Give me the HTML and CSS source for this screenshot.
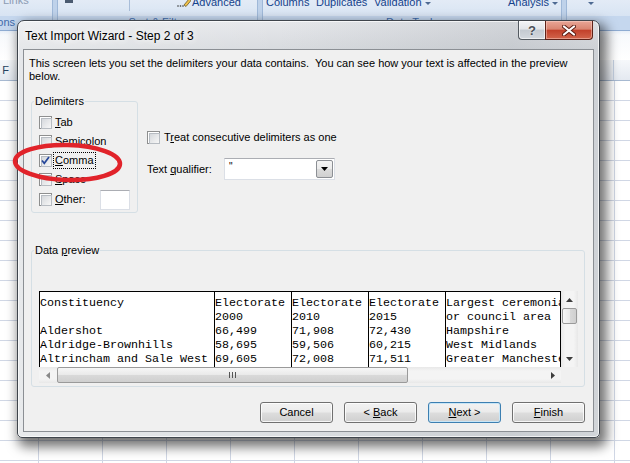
FILE: index.html
```html
<!DOCTYPE html>
<html lang="en">
<head>
<meta charset="utf-8">
<title>Text Import Wizard - Step 2 of 3</title>
<link rel="stylesheet" href="styles.css">
</head>
<body>
<div class="excel">
  <div class="ribbon">
    <div class="grp g-conn">
      <div class="grp-body"><span class="rb-item dim">Links</span></div>
      <div class="grp-label conn-label"><span>Connections</span></div>
    </div>
    <div class="grp g-sort">
      <div class="grp-body">
        <span class="sort-ico"></span>
        <span class="rb-sep"></span>
        <svg class="adv-ico" width="14" height="9" viewBox="0 0 14 9"><circle cx="1" cy="7" r="0.8" fill="#333"/><circle cx="3.5" cy="7" r="0.8" fill="#333"/><circle cx="6" cy="7" r="0.8" fill="#333"/><path d="M7 6 L12 0 L14 1.5 L9 7.5 Z" fill="#f2c24a" stroke="#6b5a2a" stroke-width="0.8"/></svg>
        <span class="rb-item">Advanced</span>
      </div>
      <div class="grp-label">Sort &amp; Filter</div>
    </div>
    <div class="grp g-data">
      <div class="grp-body">
        <span class="rb-item i-cols">Columns</span>
        <span class="rb-item i-dup">Duplicates</span>
        <span class="rb-item i-val">Validation <span class="caret"></span></span>
        <span class="rb-item i-ana">Analysis <span class="caret"></span></span>
      </div>
      <div class="grp-label">Data Tools</div>
    </div>
    <div class="grp g-out">
      <div class="grp-body"><span class="rb-item i-out"><span class="caret"></span></span></div>
      <div class="grp-label"></div>
    </div>
  </div>
  <div class="formula"></div>
  <div class="colhead">
    <span class="hcell first">F</span><span class="hcell">G</span><span class="hcell">H</span><span class="hcell">I</span><span class="hcell">J</span><span class="hcell">K</span><span class="hcell">L</span><span class="hcell">M</span><span class="hcell">N</span><span class="hcell">O</span><span class="hcell">P</span>
  </div>
  <div class="grid"></div>
</div>

<div class="dialog">
  <div class="titlebar">
    <span class="title">Text Import Wizard - Step 2 of 3</span>
    <div class="capbtns">
      <span class="cap help">?</span>
      <span class="cap close"><svg width="14" height="11" viewBox="0 0 14 11"><path d="M2 1.5 L12 9.5 M12 1.5 L2 9.5" stroke="#5b1c12" stroke-width="4" stroke-linecap="round"/><path d="M2 1.5 L12 9.5 M12 1.5 L2 9.5" stroke="#fff" stroke-width="2.2" stroke-linecap="round"/></svg></span>
    </div>
  </div>
  <div class="client">
    <p class="intro">This screen lets you set the delimiters your data contains.&nbsp; You can see how your text is affected in the preview<br>below.</p>
    <div class="options">
      <fieldset class="group delims">
        <legend>Delimiters</legend>
        <div class="cb-row"><span class="cb"></span><span class="lbl"><u>T</u>ab</span></div>
        <div class="cb-row"><span class="cb"></span><span class="lbl">Se<u>m</u>icolon</span></div>
        <div class="cb-row"><span class="cb checked"><svg width="11" height="11" viewBox="0 0 11 11"><path d="M2 5.5 L4.3 8.3 L9 2" fill="none" stroke="#26479a" stroke-width="1.7"/></svg></span><span class="lbl focus"><u>C</u>omma</span></div>
        <div class="cb-row"><span class="cb"></span><span class="lbl"><u>S</u>pace</span></div>
        <div class="cb-row other"><span class="cb"></span><span class="lbl other-lbl"><u>O</u>ther:</span><span class="textbox"></span></div>
      </fieldset>
      <div class="side">
        <div class="cb-row treat"><span class="cb"></span><span class="lbl">T<u>r</u>eat consecutive delimiters as one</span></div>
        <div class="qual-row">
          <span class="qual-label">Text <u>q</u>ualifier:</span>
          <div class="combo">
            <span class="combo-val">"</span>
            <span class="combo-btn"><svg width="7" height="4" viewBox="0 0 7 4"><polygon points="0,0 7,0 3.5,4" fill="#000"/></svg></span>
          </div>
        </div>
      </div>
    </div>
    <fieldset class="group preview-grp">
      <legend>Data <u>p</u>review</legend>
      <div class="preview">
        <div class="ptext">
          <div class="pcol c1">Constituency

Aldershot
Aldridge-Brownhills
Altrincham and Sale West</div>
          <div class="pcol cn">Electorate
2000
66,499
58,695
69,605</div>
          <div class="pcol cn">Electorate
2010
71,908
59,506
72,008</div>
          <div class="pcol cn">Electorate
2015
72,430
60,215
71,511</div>
          <div class="pcol c5">Largest ceremonial
or council area
Hampshire
West Midlands
Greater Manchester</div>
        </div>
        <div class="vscroll">
          <span class="sb-btn"><svg width="7" height="4" viewBox="0 0 7 4"><polygon points="0,4 7,4 3.5,0" fill="#3d3d3d"/></svg></span>
          <span class="thumb vthumb"></span>
          <span class="sb-fill"></span>
          <span class="sb-btn"><svg width="7" height="4" viewBox="0 0 7 4"><polygon points="0,0 7,0 3.5,4" fill="#3d3d3d"/></svg></span>
        </div>
        <div class="hscroll">
          <span class="sb-btn"><svg width="4" height="7" viewBox="0 0 4 7"><polygon points="4,0 4,7 0,3.5" fill="#8a8a8a"/></svg></span>
          <span class="thumb hthumb"><span class="grip"></span></span>
          <span class="sb-fill"></span>
          <span class="sb-btn"><svg width="4" height="7" viewBox="0 0 4 7"><polygon points="0,0 0,7 4,3.5" fill="#3d3d3d"/></svg></span>
        </div>
        <div class="corner"></div>
      </div>
    </fieldset>
    <div class="buttons">
      <span class="btn"><span>Cancel</span></span>
      <span class="btn"><span>&lt; <u>B</u>ack</span></span>
      <span class="btn default"><span><u>N</u>ext &gt;</span></span>
      <span class="btn"><span><u>F</u>inish</span></span>
    </div>
  </div>
</div>

<svg class="annot" width="630" height="463" viewBox="0 0 630 463">
  <ellipse cx="67.5" cy="162.5" rx="52.5" ry="17.5" fill="none" stroke="#e1232a" stroke-width="4.5" transform="rotate(1.5 67.5 162.5)"/>
</svg>
</body>
</html>
```

FILE: styles.css
```css
* { box-sizing: border-box; }
html, body { margin: 0; padding: 0; }
body {
  width: 630px;
  height: 463px;
  overflow: hidden;
  position: relative;
  font-family: "Liberation Sans", Arial, sans-serif;
  font-size: 11px;
  color: #000;
  background: #fff;
}

/* ---------- Excel background ---------- */
.excel { height: 463px; display: flex; flex-direction: column; }
.ribbon {
  height: 31px;
  display: flex;
  gap: 4px;
  background: #bfd2ea;
  border-bottom: 1px solid #8eabd2;
  flex: none;
}
.grp { display: flex; flex-direction: column; flex: none; }
.g-conn { width: 53px; border-right: 1px solid #9fb8d8; }
.g-sort { width: 201px; border-left: 1px solid #9fb8d8; border-right: 1px solid #9fb8d8; }
.g-data { width: 300px; border-left: 1px solid #9fb8d8; border-right: 1px solid #9fb8d8; }
.g-out { flex: 1; border-left: 1px solid #9fb8d8; }
.grp-body {
  height: 16px;
  background: linear-gradient(#e3ebf6, #d8e4f3);
  display: flex;
  align-items: flex-start;
  overflow: hidden;
}
.grp-label {
  flex: 1;
  background: #c5d7ee;
  color: #3e6aaa;
  text-align: center;
  line-height: 13px;
  white-space: nowrap;
  overflow: hidden;
}
.conn-label { display: flex; justify-content: flex-end; padding-right: 37px; }
.conn-label span { flex: none; }
.rb-item { color: #15428b; line-height: 11px; margin-top: -3px; white-space: nowrap; }
.rb-item.dim { color: #8c9cb3; margin-left: 3px; margin-top: -5px; }
.sort-ico { width: 8px; height: 3px; margin-left: 7px; background: #4a5a70; }
.rb-sep { width: 1px; height: 11px; background: #a8bdd9; margin-left: 56px; }
.adv-ico { margin-left: 47px; margin-top: -1px; }
.g-sort .rb-item { margin-left: 1px; }
.i-cols { width: 50px; margin-left: 3px; }
.i-dup { width: 58px; }
.i-val { width: 134px; }
.i-ana { width: 52px; }
.i-out { margin-left: 21px; }
.caret {
  display: inline-block;
  vertical-align: middle;
  border-left: 3px solid transparent;
  border-right: 3px solid transparent;
  border-top: 3px solid #4e6a92;
}
.formula {
  height: 29px;
  flex: none;
  background: linear-gradient(#e8eff8, #f7f9fc 4px, #ffffff);
}
.colhead {
  height: 21px;
  flex: none;
  display: flex;
  overflow: hidden;
  background: linear-gradient(#f6f8fb, #e4e9f1);
  border-bottom: 1px solid #a7b9d1;
  color: #27415f;
}
.hcell {
  width: 64px;
  flex: none;
  text-align: center;
  line-height: 20px;
  border-right: 1px solid #c5d1e2;
}
.hcell.first { margin-left: -26px; }
.grid {
  flex: 1;
  background-color: #fff;
  background-image:
    linear-gradient(90deg, #d0d7e5 1px, transparent 1px),
    linear-gradient(#d0d7e5 1px, transparent 1px);
  background-size: 64px 20px, 64px 20px;
  background-position: 38px 0, 0 19px;
}

/* ---------- Dialog window ---------- */
.dialog {
  position: absolute;
  left: 17px;
  top: 20px;
  width: 583px;
  height: 418px;
  border: 1px solid #3f454c;
  border-radius: 7px 7px 5px 5px;
  background:
    linear-gradient(90deg, rgba(255,255,255,.35), rgba(255,255,255,0) 45%, rgba(120,128,138,.18) 85%, rgba(120,128,138,.1)),
    linear-gradient(#e6e8eb, #d8dbdf 28px, #dcdfe2);
  box-shadow: 4px 6px 12px 3px rgba(0,0,0,.55), inset 0 0 0 1px rgba(255,255,255,.7);
  padding: 0 5px 5px;
  display: flex;
  flex-direction: column;
}
.titlebar { height: 28px; flex: none; display: flex; align-items: flex-start; }
.title {
  font-size: 12px;
  line-height: 16px;
  margin: 7px 0 0 2px;
  text-shadow: 0 0 6px #fff, 0 0 10px #fff;
}
.capbtns { margin-left: auto; margin-right: 1px; display: flex; }
.cap {
  height: 19px;
  display: flex;
  align-items: center;
  justify-content: center;
  border: 1px solid #545a61;
  border-top: none;
}
.help {
  width: 27px;
  border-right: none;
  border-radius: 0 0 0 4px;
  background: linear-gradient(#f3f4f6, #e2e5e9 45%, #c4cad1 50%, #d3d8de);
  box-shadow: inset 0 0 0 1px rgba(255,255,255,.6);
  font-weight: bold;
  font-size: 13px;
  color: #4a4f56;
  text-shadow: 0 0 2px #fff;
}
.close {
  width: 48px;
  border-radius: 0 0 4px 0;
  border-color: #5e2218;
  background: linear-gradient(#e9a697, #d98571 45%, #c2412b 52%, #d2654c);
  box-shadow: inset 0 0 0 1px rgba(255,220,210,.45);
}

.client {
  flex: 1;
  background: #f0f0f0;
  border: 1px solid #8b8f94;
  display: flex;
  flex-direction: column;
  padding: 0 8px 0 5px;
}
.intro { margin: 0; padding-top: 7px; line-height: 13px; }

.group {
  border: 1px solid #d5dfe5;
  border-radius: 3px;
  min-inline-size: 0;
}
.group legend {
  margin-left: -5px;
  padding: 0 1px;
  line-height: 13px;
}
.options { display: flex; align-items: flex-start; margin-top: 12px; }
fieldset.delims { width: 107px; margin: 0 0 0 2px; padding: 5px 0 2px 7px; flex: none; }
.cb-row { height: 19px; display: flex; align-items: center; }
.cb-row.other { height: 21px; }
.cb {
  width: 13px;
  height: 13px;
  flex: none;
  border: 1px solid #8e8f8f;
  background: #fff;
  padding: 1px;
  position: relative;
}
.cb::before {
  content: "";
  display: block;
  width: 9px;
  height: 9px;
  border: 1px solid #b7bcc2;
  background: linear-gradient(135deg, #d5d8dc, #f7f7f7);
}
.cb svg { position: absolute; left: 0; top: 0; }
.lbl { margin-left: 3px; line-height: 13px; white-space: nowrap; }
.focus { outline: 1px dotted #000; outline-offset: 1px; }
.other-lbl { width: 45px; }
.textbox {
  width: 30px;
  height: 20px;
  background: #fff;
  border: 1px solid #dbdfe6;
  border-top-color: #abadb3;
}

.side { margin-left: 9px; margin-top: 36px; display: flex; flex-direction: column; }
.treat { height: 13px; }
.treat .lbl { margin-left: 4px; }
.qual-row { display: flex; align-items: center; margin-top: 14px; }
.qual-label { width: 77px; }
.combo {
  width: 111px;
  height: 22px;
  background: #fff;
  border: 1px solid #dbdfe6;
  border-top-color: #abadb3;
  display: flex;
  justify-content: space-between;
  padding: 1px;
}
.combo-val { padding: 1px 0 0 3px; line-height: 11px; font-size: 10px; }
.combo-btn {
  width: 17px;
  height: 18px;
  border: 1px solid #8c8f94;
  border-radius: 2px;
  background: linear-gradient(#f4f4f4, #ebebeb 50%, #dcdcdc 50%, #d0d0d0);
  display: flex;
  align-items: center;
  justify-content: center;
}

fieldset.preview-grp { width: 554px; margin: 31px 0 0 2px; padding: 34px 0 3px 7px; }
.preview {
  display: grid;
  grid-template-columns: 522px 17px;
  grid-template-rows: 76px 16px;
  width: 539px;
}
.ptext {
  display: flex;
  border-top: 1px solid #000;
  border-left: 1px solid #000;
  border-right: 1px solid #000;
  background: #fff;
  overflow: hidden;
  font-family: "Liberation Mono", "Courier New", monospace;
  font-size: 11.67px;
  line-height: 14px;
}
.pcol { white-space: pre; padding-top: 4px; overflow: hidden; flex: none; }
.c1 { width: 174px; }
.cn { width: 77px; border-left: 1px solid #000; }
.c5 { flex: 1; border-left: 1px solid #000; }

.vscroll {
  display: flex;
  flex-direction: column;
  background: linear-gradient(90deg, #e8e8e8, #f4f4f4 25%, #f4f4f4 75%, #e8e8e8);
}
.hscroll {
  display: flex;
  background: linear-gradient(#e8e8e8, #f4f4f4 25%, #f4f4f4 75%, #e8e8e8);
}
.sb-btn {
  width: 17px;
  height: 17px;
  flex: none;
  display: flex;
  align-items: center;
  justify-content: center;
}
.hscroll .sb-btn { height: 16px; }
.sb-fill { flex: 1; }
.thumb {
  border: 1px solid #9a9a9a;
  border-radius: 2px;
  display: flex;
  align-items: center;
  justify-content: center;
}
.vthumb {
  height: 16px;
  margin: 0 1px;
  background: linear-gradient(90deg, #f6f6f6, #e9e9e9 50%, #d9d9d9 51%, #cfcfcf);
}
.hthumb {
  width: 351px;
  margin: 0 1px;
  background: linear-gradient(#f6f6f6, #e9e9e9 50%, #d9d9d9 51%, #cfcfcf);
}
.grip {
  width: 7px;
  height: 6px;
  background: repeating-linear-gradient(90deg, #555 0 1px, transparent 1px 3px);
}
.corner { background: #f0f0f0; }

.buttons { display: flex; justify-content: flex-end; gap: 11px; margin-top: 15px; }
.btn {
  width: 73px;
  height: 21px;
  border: 1px solid #707070;
  border-radius: 3px;
  background: linear-gradient(#f2f2f2, #ebebeb 48%, #dddddd 52%, #cfcfcf);
  box-shadow: inset 0 0 0 1px rgba(255,255,255,.8);
  display: flex;
  align-items: center;
  justify-content: center;
  line-height: 13px;
}
.btn.default {
  border-color: #3c7fb1;
  box-shadow: inset 0 0 0 1px #c8e6f7;
}

/* ---------- hand-drawn annotation ---------- */
.annot { position: absolute; left: 0; top: 0; pointer-events: none; }
```
